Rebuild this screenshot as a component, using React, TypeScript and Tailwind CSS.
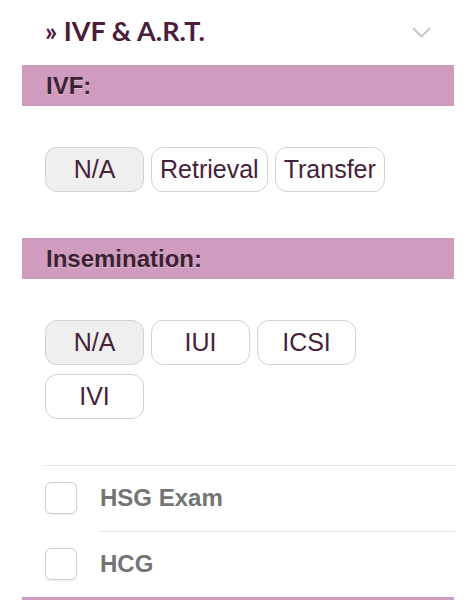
import React from "react";

const Chip = ({ label, active }: { label: string; active?: boolean }) => (
  <button
    className={
      "h-[45px] min-w-[99px] px-[8px] rounded-[12px] border border-[#d2d2d2] text-[25px] text-[#45223a] leading-none " +
      (active ? "bg-[#efefef]" : "bg-white")
    }
    style={{ fontFamily: '"Liberation Sans", Arial, sans-serif' }}
  >
    {label}
  </button>
);

const SectionBar = ({ title }: { title: string }) => (
  <div className="h-[41px] bg-[#cf9bbe] flex items-center pl-[24px]">
    <span
      className="text-[24px] font-bold text-[#3a2233] [text-shadow:0_1px_0_rgba(255,255,255,0.35)]"
      style={{ fontFamily: '"Liberation Sans", Arial, sans-serif' }}
    >
      {title}
    </span>
  </div>
);

const CheckRow = ({ label, inset }: { label: string; inset?: boolean }) => (
  <div className="relative h-[66px] flex items-center">
    <div
      className={
        "absolute top-0 right-0 h-px bg-[#e4e4e4] " + (inset ? "left-[56px]" : "left-0")
      }
    />
    <div className="ml-px w-[32px] h-[32px] rounded-[6px] border border-[#cfcfcf] bg-white shadow-[0_1px_2px_rgba(0,0,0,0.08)]" />
    <span
      className="ml-[23px] text-[24px] font-bold text-[#747474]"
      style={{ fontFamily: '"Liberation Sans", Arial, sans-serif' }}
    >
      {label}
    </span>
  </div>
);

export default function App() {
  return (
    <div className="w-[476px] h-[600px] bg-white overflow-hidden">
      {/* accordion header */}
      <div className="h-[65px] flex items-center justify-between pl-[45px] pr-[45px]">
        <span
          className="text-[27px] font-bold text-[#4b1d3d] pb-[2px]"
          style={{ fontFamily: "Lato, sans-serif" }}
        >
          » IVF &amp; A.R.T.
        </span>
        <svg width="19" height="11" viewBox="0 0 19 11" className="mb-[1px]">
          <polyline
            points="1,1 9.5,9.5 18,1"
            fill="none"
            stroke="#c9c9c9"
            strokeWidth="2"
          />
        </svg>
      </div>

      <div className="mx-[22px]">
        <SectionBar title="IVF:" />
        <div className="pl-[23px] pt-[41px] pb-[46px] flex flex-wrap gap-x-[7px] gap-y-[9px]">
          <Chip label="N/A" active />
          <Chip label="Retrieval" />
          <Chip label="Transfer" />
        </div>

        <SectionBar title="Insemination:" />
        <div className="pl-[23px] pr-[96px] pt-[41px] pb-[46px] flex flex-wrap gap-x-[7px] gap-y-[9px]">
          <Chip label="N/A" active />
          <Chip label="IUI" />
          <Chip label="ICSI" />
          <Chip label="IVI" />
        </div>

        <div className="pl-[22px] -mr-[1px]">
          <CheckRow label="HSG Exam" />
          <CheckRow label="HCG" inset />
        </div>

        <div className="h-[41px] bg-[#cf9bbe]" />
      </div>
    </div>
  );
}
